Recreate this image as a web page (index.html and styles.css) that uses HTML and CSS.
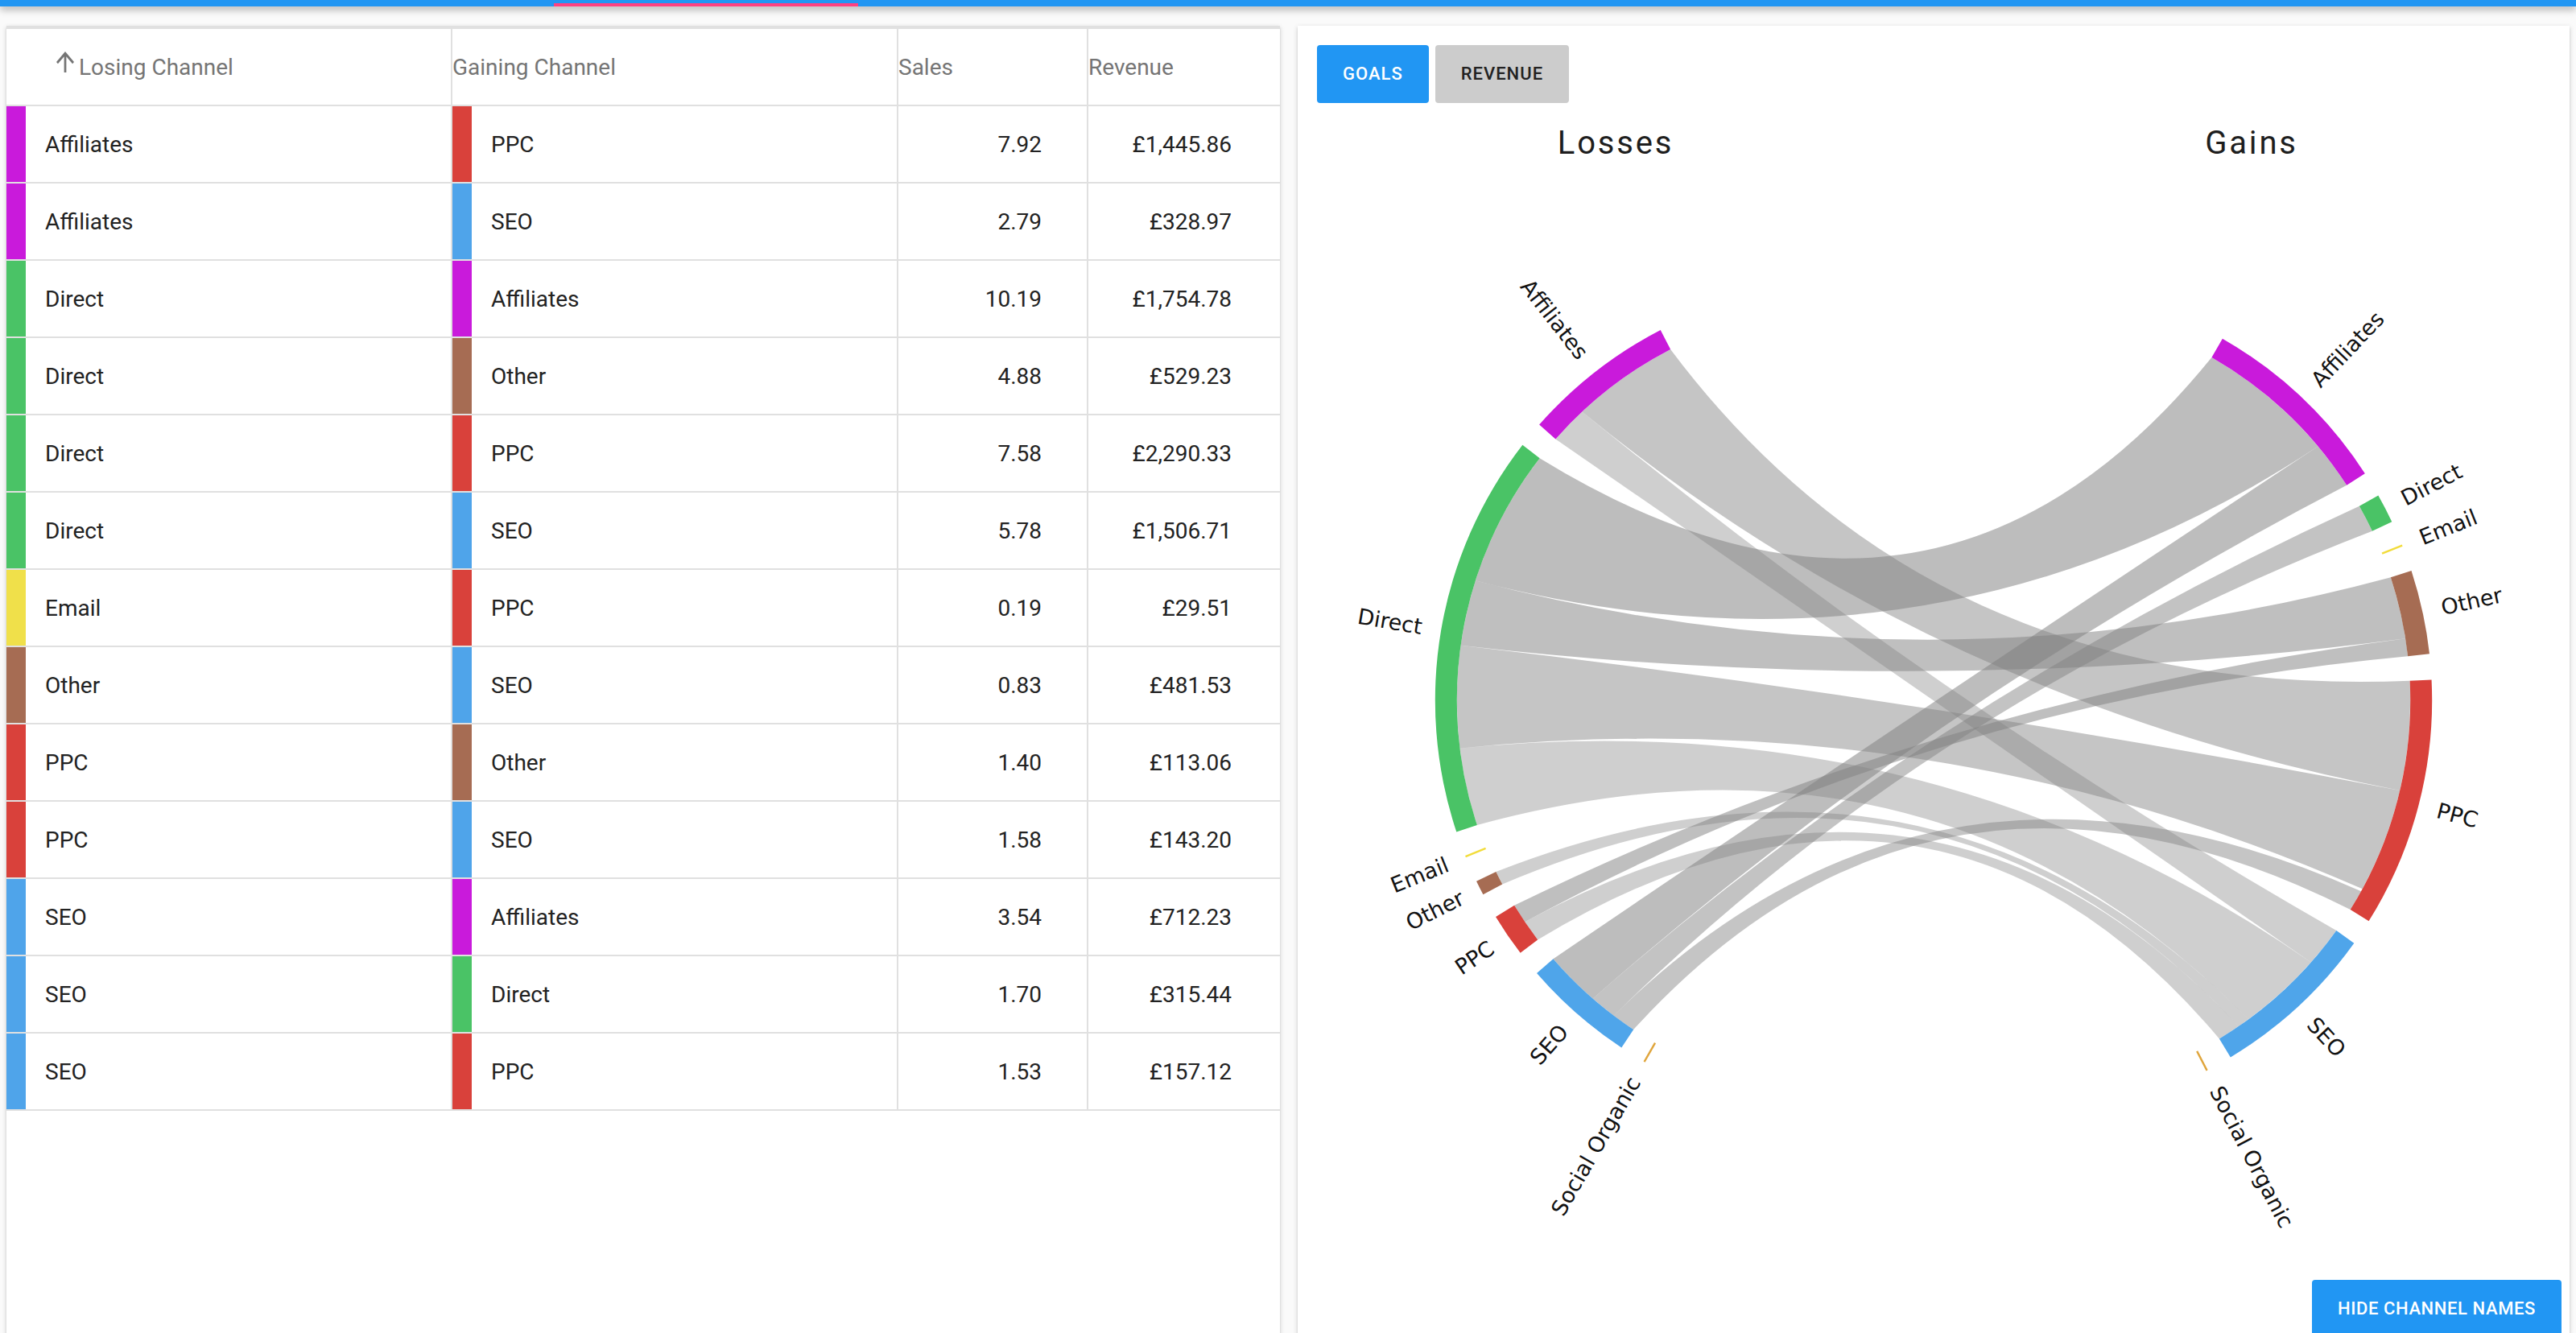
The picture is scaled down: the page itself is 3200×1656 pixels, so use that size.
FILE: index.html
```html
<!DOCTYPE html>
<html lang="en">
<head>
<meta charset="utf-8">
<title>Channel Losses and Gains</title>
<link rel="stylesheet" href="styles.css">
</head>
<body>
<header class="appbar"><span class="tab-indicator"></span></header>
<main class="content">
  <section class="card table-card">
    <table class="flows">
      <colgroup><col class="c-lose"><col class="c-gain"><col class="c-sales"><col class="c-rev"></colgroup>
      <thead>
        <tr>
          <th class="sorted"><span class="th-inner"><svg class="sort-icon" viewBox="4 4 16 16" preserveAspectRatio="none"><path d="M4 12l1.41 1.41L11 7.83V20h2V7.83l5.58 5.59L20 12l-8-8-8 8z"/></svg>Losing Channel</span></th>
          <th>Gaining Channel</th>
          <th>Sales</th>
          <th>Revenue</th>
        </tr>
      </thead>
      <tbody>
        <tr><td><div class="chan"><span class="sw aff"></span>Affiliates</div></td><td><div class="chan"><span class="sw ppc"></span>PPC</div></td><td class="num">7.92</td><td class="num rev">£1,445.86</td></tr>
        <tr><td><div class="chan"><span class="sw aff"></span>Affiliates</div></td><td><div class="chan"><span class="sw seo"></span>SEO</div></td><td class="num">2.79</td><td class="num rev">£328.97</td></tr>
        <tr><td><div class="chan"><span class="sw dir"></span>Direct</div></td><td><div class="chan"><span class="sw aff"></span>Affiliates</div></td><td class="num">10.19</td><td class="num rev">£1,754.78</td></tr>
        <tr><td><div class="chan"><span class="sw dir"></span>Direct</div></td><td><div class="chan"><span class="sw oth"></span>Other</div></td><td class="num">4.88</td><td class="num rev">£529.23</td></tr>
        <tr><td><div class="chan"><span class="sw dir"></span>Direct</div></td><td><div class="chan"><span class="sw ppc"></span>PPC</div></td><td class="num">7.58</td><td class="num rev">£2,290.33</td></tr>
        <tr><td><div class="chan"><span class="sw dir"></span>Direct</div></td><td><div class="chan"><span class="sw seo"></span>SEO</div></td><td class="num">5.78</td><td class="num rev">£1,506.71</td></tr>
        <tr><td><div class="chan"><span class="sw eml"></span>Email</div></td><td><div class="chan"><span class="sw ppc"></span>PPC</div></td><td class="num">0.19</td><td class="num rev">£29.51</td></tr>
        <tr><td><div class="chan"><span class="sw oth"></span>Other</div></td><td><div class="chan"><span class="sw seo"></span>SEO</div></td><td class="num">0.83</td><td class="num rev">£481.53</td></tr>
        <tr><td><div class="chan"><span class="sw ppc"></span>PPC</div></td><td><div class="chan"><span class="sw oth"></span>Other</div></td><td class="num">1.40</td><td class="num rev">£113.06</td></tr>
        <tr><td><div class="chan"><span class="sw ppc"></span>PPC</div></td><td><div class="chan"><span class="sw seo"></span>SEO</div></td><td class="num">1.58</td><td class="num rev">£143.20</td></tr>
        <tr><td><div class="chan"><span class="sw seo"></span>SEO</div></td><td><div class="chan"><span class="sw aff"></span>Affiliates</div></td><td class="num">3.54</td><td class="num rev">£712.23</td></tr>
        <tr><td><div class="chan"><span class="sw seo"></span>SEO</div></td><td><div class="chan"><span class="sw dir"></span>Direct</div></td><td class="num">1.70</td><td class="num rev">£315.44</td></tr>
        <tr><td><div class="chan"><span class="sw seo"></span>SEO</div></td><td><div class="chan"><span class="sw ppc"></span>PPC</div></td><td class="num">1.53</td><td class="num rev">£157.12</td></tr>
      </tbody>
    </table>
  </section>
  <section class="card chart-card">
    <div class="toggle">
      <button class="btn primary">Goals</button>
      <button class="btn secondary">Revenue</button>
    </div>
    <div class="titles"><h2>Losses</h2><h2>Gains</h2></div>
    <svg id="chord" class="chord" viewBox="0 0 790 694"></svg>
    <div class="card-footer"><button class="btn primary">Hide channel names</button></div>
  </section>
</main>
<script src="chart.js"></script>
</body>
</html>
```
FILE: styles.css
```css
* { box-sizing: border-box; }
html { zoom: 2; overflow: hidden; }
body {
  margin: 0;
  background: #fafafa;
  font-family: Roboto, "Liberation Sans", sans-serif;
  color: #222;
  overflow: hidden;
}
.appbar {
  height: 4px;
  background: #2196f3;
  box-shadow: 0 2px 5px rgba(0,0,0,.3);
  display: flex;
  align-items: flex-end;
  padding-left: 344px;
  position: relative;
  z-index: 2;
}
.tab-indicator { width: 189px; height: 2px; background: #ff4081; }

.content {
  display: grid;
  grid-template-columns: 791px 790px;
  column-gap: 11px;
  padding: 12px 4px 0;
}
.card {
  background: #fff;
  box-shadow: 0 1px 3px rgba(0,0,0,.18), 0 1px 1px rgba(0,0,0,.1);
}

/* table */
.flows {
  width: 100%;
  table-layout: fixed;
  border-collapse: separate;
  border-spacing: 0;
  border-top: 2px solid #e0e0e0;
  font-size: 14px;
}
.c-lose { width: 277px; }
.c-gain { width: 277px; }
.c-sales { width: 118px; }
.flows th, .flows td {
  padding: 0;
  border-bottom: 1px solid #e0e0e0;
  border-right: 1px solid #e0e0e0;
  vertical-align: middle;
}
.flows th:last-child, .flows td:last-child { border-right: 0; }
.flows th {
  height: 48px;
  text-align: left;
  font-weight: 400;
  color: #757575;
}
.flows th.sorted { padding-left: 31px; }
.th-inner { display: flex; align-items: center; }
.sort-icon { width: 11px; height: 13px; fill: #757575; margin: 0 3px 6px 0; flex: none; }
.flows td { height: 48px; color: #222; }
.chan { display: flex; align-items: center; height: 47px; }
.sw { width: 12px; align-self: stretch; margin-right: 12px; flex: none; }
.num { text-align: right; padding-right: 28px !important; }
.num.rev { padding-right: 30px !important; }

.sw.aff { background: #c91adb; }
.sw.dir { background: #4ac366; }
.sw.eml { background: #f0e04a; }
.sw.oth { background: #a66c53; }
.sw.ppc { background: #d9413b; }
.sw.seo { background: #4fa4ea; }

/* chart card */
.chart-card { display: flex; flex-direction: column; }
.toggle { display: flex; gap: 4px; padding: 12px 12px 0; }
.btn {
  height: 36px;
  padding: 0 16px;
  border: 0;
  border-radius: 2px;
  font: 500 11px/36px Roboto, "Liberation Sans", sans-serif;
  letter-spacing: .5px;
  text-transform: uppercase;
}
.btn.primary { background: #2196f3; color: #fff; }
.btn.secondary { background: #cccccc; color: #222; }
.titles { display: flex; margin-top: 13px; }
.titles h2 {
  flex: 1;
  margin: 0;
  text-align: center;
  font: 400 20px/24px Roboto, "Liberation Sans", sans-serif;
  letter-spacing: 1.4px;
  color: #1e1e1e;
}
.chord { display: block; width: 790px; height: 694px; }
.card-footer { display: flex; justify-content: flex-end; padding-right: 5px; }
.card-footer .btn { letter-spacing: .3px; }

/* chord parts */
.rib { fill: #808080; }
.rib.to-affiliates { fill-opacity: .52; }
.rib.to-direct { fill-opacity: .47; }
.rib.to-other { fill-opacity: .5; }
.rib.to-ppc { fill-opacity: .46; }
.rib.to-seo { fill-opacity: .38; }
.grp-affiliates { fill: #c91adb; stroke: #c91adb; }
.grp-direct { fill: #4ac366; stroke: #4ac366; }
.grp-email { fill: #f2dc3a; stroke: #f2dc3a; }
.grp-other { fill: #a66c53; stroke: #a66c53; }
.grp-ppc { fill: #d9413b; stroke: #d9413b; }
.grp-seo { fill: #4fa5ea; stroke: #4fa5ea; }
.grp-social-organic { fill: #e0a53c; stroke: #e0a53c; }
.grp { stroke-width: 0; }
.grp.zero { stroke-width: 1.2px; fill: none; }
.lbl {
  font-family: "DejaVu Sans", sans-serif;
  font-size: 13.5px;
  fill: #111;
}
```
FILE: chart.js
```js
(function () {
  var NS = 'http://www.w3.org/2000/svg';
  var svg = document.getElementById('chord');
  var CX = 395, CY = 334, PULL = 50.6, RO = 259, RI = 245.5;
  var cxL = CX - PULL, cxR = CX + PULL;
  var order = ['Affiliates', 'Direct', 'Email', 'Other', 'PPC', 'SEO', 'Social Organic'];
  var left = {
    'Affiliates': [27.36, 48.62], 'Direct': [52.23, 108.4], 'Email': [112.0, 112.0],
    'Other': [115.7, 117.75], 'PPC': [121.27, 127.29], 'SEO': [130.86, 146.42],
    'Social Organic': [150.1, 150.1]
  };
  var right = {
    'Affiliates': [29.83, 57.04], 'Direct': [60.57, 64.64], 'Email': [68.2, 68.2],
    'Other': [71.88, 83.61], 'PPC': [87.17, 121.98], 'SEO': [125.62, 148.89],
    'Social Organic': [152.6, 152.6]
  };
  var flows = [
    ['Affiliates', 'PPC', 7.92], ['Affiliates', 'SEO', 2.79],
    ['Direct', 'Affiliates', 10.19], ['Direct', 'Other', 4.88], ['Direct', 'PPC', 7.58], ['Direct', 'SEO', 5.78],
    ['Email', 'PPC', 0.19], ['Other', 'SEO', 0.83],
    ['PPC', 'Other', 1.40], ['PPC', 'SEO', 1.58],
    ['SEO', 'Affiliates', 3.54], ['SEO', 'Direct', 1.70], ['SEO', 'PPC', 1.53]
  ];
  function slug(n) { return n.toLowerCase().replace(/\s+/g, '-'); }
  function pt(side, deg, r) {
    var a = deg * Math.PI / 180;
    var x = side === 'L' ? cxL - r * Math.sin(a) : cxR + r * Math.sin(a);
    return [x, CY - r * Math.cos(a)];
  }
  function f(p) { return p[0].toFixed(2) + ',' + p[1].toFixed(2); }
  function el(tag, attrs, parent) {
    var e = document.createElementNS(NS, tag);
    for (var k in attrs) e.setAttribute(k, attrs[k]);
    (parent || svg).appendChild(e);
    return e;
  }
  // subgroup angles
  var srcAng = {}, tgtAng = {};
  order.forEach(function (g) {
    var out = flows.filter(function (fl) { return fl[0] === g; })
      .sort(function (a, b) { return order.indexOf(a[1]) - order.indexOf(b[1]); });
    var tot = out.reduce(function (s, fl) { return s + fl[2]; }, 0);
    var a = left[g][0], span = left[g][1] - left[g][0];
    out.forEach(function (fl) {
      var w = tot ? span * fl[2] / tot : 0;
      srcAng[fl.join('|')] = [a, a + w];
      a += w;
    });
    var inc = flows.filter(function (fl) { return fl[1] === g; })
      .sort(function (a, b) { return order.indexOf(a[0]) - order.indexOf(b[0]); });
    var tot2 = inc.reduce(function (s, fl) { return s + fl[2]; }, 0);
    var b = right[g][0], span2 = right[g][1] - right[g][0];
    inc.forEach(function (fl) {
      var w = tot2 ? span2 * fl[2] / tot2 : 0;
      tgtAng[fl.join('|')] = [b, b + w];
      b += w;
    });
  });
  var ribs = el('g', { 'class': 'ribbons' });
  flows.forEach(function (fl) {
    var key = fl.join('|');
    var s = srcAng[key], t = tgtAng[key];
    if (s[1] - s[0] < 0.6) return;
    var p1 = pt('L', s[0], RI), p2 = pt('L', s[1], RI), p3 = pt('R', t[1], RI), p4 = pt('R', t[0], RI);
    var d = 'M' + f(p1) + 'A' + RI + ',' + RI + ' 0 0 0 ' + f(p2) +
      'Q' + CX + ',' + CY + ' ' + f(p3) +
      'A' + RI + ',' + RI + ' 0 0 0 ' + f(p4) +
      'Q' + CX + ',' + CY + ' ' + f(p1) + 'Z';
    el('path', { d: d, 'class': 'rib to-' + slug(fl[1]) }, ribs);
  });
  var grps = el('g', { 'class': 'groups' });
  var lbls = el('g', { 'class': 'labels' });
  ['L', 'R'].forEach(function (side) {
    var ang = side === 'L' ? left : right;
    order.forEach(function (g) {
      var g0 = ang[g][0], g1 = ang[g][1];
      var cls = 'grp grp-' + slug(g);
      if (g1 - g0 < 0.6) {
        var m = (g0 + g1) / 2;
        var a = pt(side, m, RI), b = pt(side, m, RO);
        el('line', { x1: a[0], y1: a[1], x2: b[0], y2: b[1], 'class': cls + ' zero' }, grps);
      } else {
        var sw = side === 'L' ? 0 : 1;
        var d = 'M' + f(pt(side, g0, RO)) + 'A' + RO + ',' + RO + ' 0 0 ' + sw + ' ' + f(pt(side, g1, RO)) +
          'L' + f(pt(side, g1, RI)) + 'A' + RI + ',' + RI + ' 0 0 ' + (1 - sw) + ' ' + f(pt(side, g0, RI)) + 'Z';
        el('path', { d: d, 'class': cls }, grps);
      }
      var mid = (g0 + g1) / 2;
      var cx = side === 'L' ? cxL : cxR;
      var tr, anchor;
      if (side === 'R') {
        tr = 'translate(' + cx + ',' + CY + ') rotate(' + (mid - 90).toFixed(2) + ') translate(' + (RO + 12) + ',0)';
        anchor = 'start';
      } else {
        tr = 'translate(' + cx + ',' + CY + ') rotate(' + (270 - mid).toFixed(2) + ') translate(' + (RO + 12) + ',0) rotate(180)';
        anchor = 'end';
      }
      var t = el('text', { transform: tr, 'text-anchor': anchor, dy: '.35em', 'class': 'lbl' }, lbls);
      t.textContent = g;
    });
  });
})();
```
